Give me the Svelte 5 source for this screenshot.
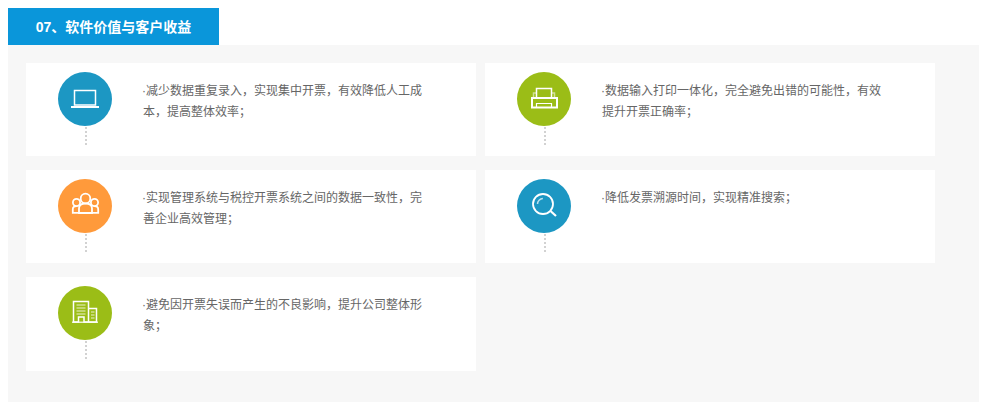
<script>
  const items = [
    { icon: "laptop", color: "#1c97c3", text: "·减少数据重复录入，实现集中开票，有效降低人工成本，提高整体效率；" },
    { icon: "printer", color: "#9bbd17", text: "·数据输入打印一体化，完全避免出错的可能性，有效提升开票正确率；" },
    { icon: "people", color: "#ff9a3b", text: "·实现管理系统与税控开票系统之间的数据一致性，完善企业高效管理；" },
    { icon: "search", color: "#1c97c3", text: "·降低发票溯源时间，实现精准搜索；" },
    { icon: "building", color: "#9bbd17", text: "·避免因开票失误而产生的不良影响，提升公司整体形象；" }
  ];
</script>

<section class="block">
  <h3 class="title">07、软件价值与客户收益</h3>
  <div class="panel">
    {#each items as item}
      <div class="card">
        <div class="side">
          <div class="circle" style={`background:${item.color}`}>
            <svg viewBox="0 0 54 54" width="54" height="54" fill="none" stroke="#fff" stroke-width="1.5">
              {#if item.icon === "laptop"}
                <rect x="16.5" y="18.5" width="21" height="14.5" />
                <path d="M13 35h28" stroke-width="2" />
              {:else if item.icon === "printer"}
                <path d="M19.5 26V16.5h15V26" />
                <path d="M16.5 26v-5h3M37.5 26v-5h-3" stroke-opacity=".55" />
                <rect x="15" y="26" width="25" height="9.5" stroke-width="2" />
                <path d="M19.5 35v-3.5h15V35" stroke-width="1.2" />
              {:else if item.icon === "people"}
                <circle cx="27.5" cy="19.5" r="4.8" stroke-width="1.8" />
                <circle cx="18.5" cy="23.5" r="3.6" stroke-width="1.8" />
                <circle cx="36.5" cy="23.5" r="3.6" stroke-width="1.8" />
                <path d="M21 34v-4.5c0-3 2.5-5 6.5-5s6.5 2 6.5 5V34z" stroke-width="1.8" />
                <path d="M21 33.8h-6.2v-3.3c0-2 1.3-3.3 3.7-3.3M34 33.8h6.2v-3.3c0-2-1.3-3.3-3.7-3.3" stroke-width="1.8" />
              {:else if item.icon === "search"}
                <circle cx="26" cy="25" r="10" stroke-width="1.8" />
                <path d="M20.5 25c0-3 2.4-5.4 5.4-5.5" stroke-opacity=".7" />
                <path d="M33.5 32l5.5 5" stroke-width="2.2" />
              {:else}
                <path d="M15.5 36V15.5h15V36h-4.5v-5H20.500v5z" stroke-width="1.5" />
                <path d="M31 22.5h7.5V36H31" stroke-width="1.5" />
                <path d="M18.5 19h9M18.5 22h9M18.5 25h9M18.500 28h9M33 26h3.500M33 29h3.500M33 32h3.500" stroke-width="1.2" stroke-opacity=".8" />
                <path d="M14 36.2h26" stroke-width="1.2" />
              {/if}
            </svg>
          </div>
          <div class="dots"></div>
        </div>
        <p class="text">{item.text}</p>
      </div>
    {/each}
  </div>
</section>

<style>
  :global(body) {
    background: #fff;
  }

  .block {
    padding: 8px 5px 5px 8px;
    font-family: "Liberation Sans", "Noto Sans CJK SC", sans-serif;
  }

  .title {
    width: 211px;
    height: 37px;
    margin: 0;
    background: #0a96da;
    color: #fff;
    font-size: 14px;
    font-weight: bold;
    line-height: 38px;
    text-align: center;
  }

  .panel {
    display: grid;
    grid-template-columns: 450px 450px;
    grid-template-rows: 93px 93px 94px;
    column-gap: 9px;
    row-gap: 14px;
    height: 357px;
    box-sizing: border-box;
    padding: 18px 18px 0;
    background: #f7f7f7;
  }

  .card {
    display: flex;
    gap: 31px;
    padding: 9px 0 0 32px;
    box-sizing: border-box;
    background: #fff;
  }

  .side {
    display: flex;
    flex-direction: column;
    align-items: center;
    width: 54px;
    flex: none;
  }

  .circle {
    width: 54px;
    height: 54px;
    border-radius: 50%;
  }

  .circle svg {
    display: block;
  }

  .dots {
    width: 0;
    height: 18px;
    margin: 1px 0 0 2px;
    border-left: 2px dotted #d2d2d2;
  }

  .text {
    width: 285px;
    margin: 9px 0 0;
    color: #666;
    font-size: 12px;
    line-height: 21px;
    text-indent: -1px;
  }
</style>
